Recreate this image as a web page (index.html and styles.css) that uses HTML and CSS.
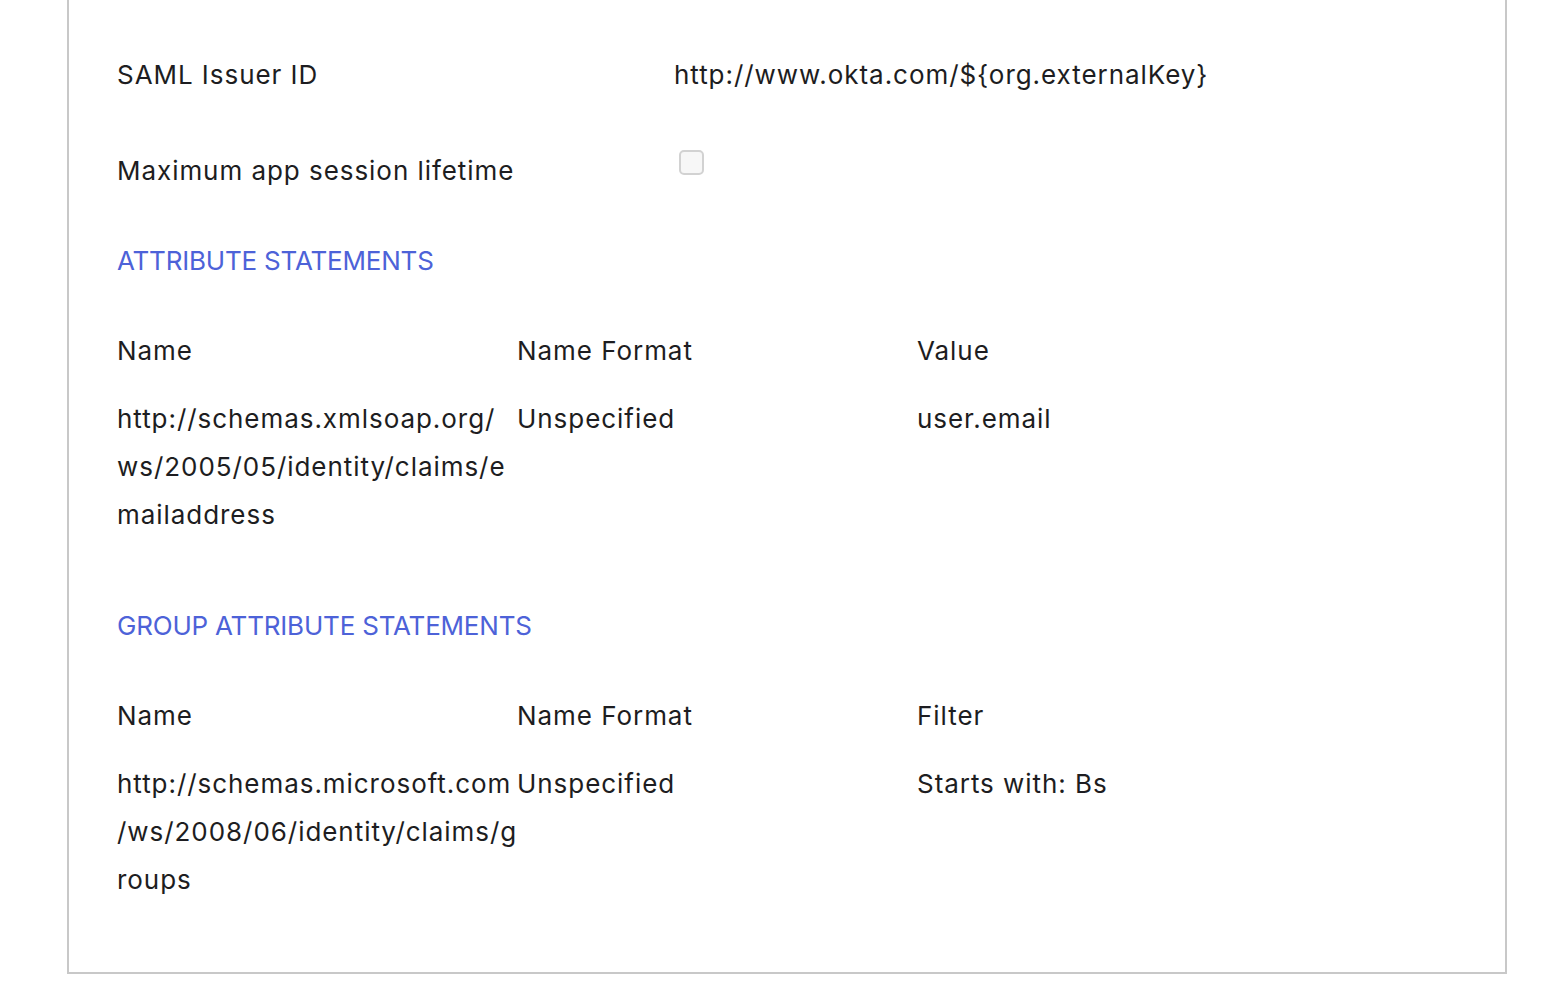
FILE: index.html
```html
<!DOCTYPE html>
<html lang="en">
<head>
<meta charset="utf-8">
<title>SAML Settings</title>
<link rel="stylesheet" href="styles.css">
</head>
<body>
<div class="panel">
  <div class="field">
    <div class="field-label">SAML Issuer ID</div>
    <div class="field-value">http://www.okta.com/${org.externalKey}</div>
  </div>
  <div class="field field-gap">
    <div class="field-label">Maximum app session lifetime</div>
    <div class="field-value"><span class="checkbox"></span></div>
  </div>

  <h3 class="section-title">ATTRIBUTE STATEMENTS</h3>
  <div class="attr-table">
    <div class="attr-row attr-head">
      <div class="cell">Name</div>
      <div class="cell">Name Format</div>
      <div class="cell">Value</div>
    </div>
    <div class="attr-row">
      <div class="cell cell-break"><span class="seg">http://schemas.xmlsoap.org/</span><span class="seg">ws/2005/05/identity/claims/e</span><span class="seg">mailaddress</span></div>
      <div class="cell">Unspecified</div>
      <div class="cell">user.email</div>
    </div>
  </div>

  <h3 class="section-title section-title-2">GROUP ATTRIBUTE STATEMENTS</h3>
  <div class="attr-table">
    <div class="attr-row attr-head">
      <div class="cell">Name</div>
      <div class="cell">Name Format</div>
      <div class="cell">Filter</div>
    </div>
    <div class="attr-row">
      <div class="cell cell-break"><span class="seg">http://schemas.microsoft.com</span><span class="seg">/ws/2008/06/identity/claims/g</span><span class="seg">roups</span></div>
      <div class="cell">Unspecified</div>
      <div class="cell">Starts with: Bs</div>
    </div>
  </div>
</div>
</body>
</html>
```

FILE: styles.css
```css
html, body {
  margin: 0;
  padding: 0;
  background: #ffffff;
}

body {
  font-family: Inter, "Noto Sans", "Liberation Sans", sans-serif;
  font-size: 26px;
  line-height: 48px;
  letter-spacing: 0.95px;
  color: #1d1d21;
}

.panel {
  box-sizing: border-box;
  width: 1440px;
  margin-left: 67px;
  padding: 51px 48px 68px 48px;
  border: 2px solid #c8c8c8;
  border-top: none;
}

.field {
  display: grid;
  grid-template-columns: 557px 1fr;
}

.field-gap {
  margin-top: 48px;
}

.checkbox {
  display: inline-block;
  box-sizing: border-box;
  width: 25px;
  height: 25px;
  margin-left: 5px;
  margin-top: 3px;
  vertical-align: top;
  border: 2px solid #d2d2d2;
  border-radius: 5px;
  background: #f7f7f7;
}

.section-title {
  margin: 42px 0 0 0;
  font-size: 26px;
  font-weight: 400;
  line-height: 48px;
  letter-spacing: -0.2px;
  color: #4d62d8;
}

.section-title-2 {
  margin-top: 63px;
}

.attr-table {
  margin-top: 42px;
}

.attr-row {
  display: grid;
  grid-template-columns: 400px 400px 1fr;
}

.attr-head {
  margin-bottom: 20px;
}

.cell-break .seg {
  display: block;
  white-space: nowrap;
}
```
